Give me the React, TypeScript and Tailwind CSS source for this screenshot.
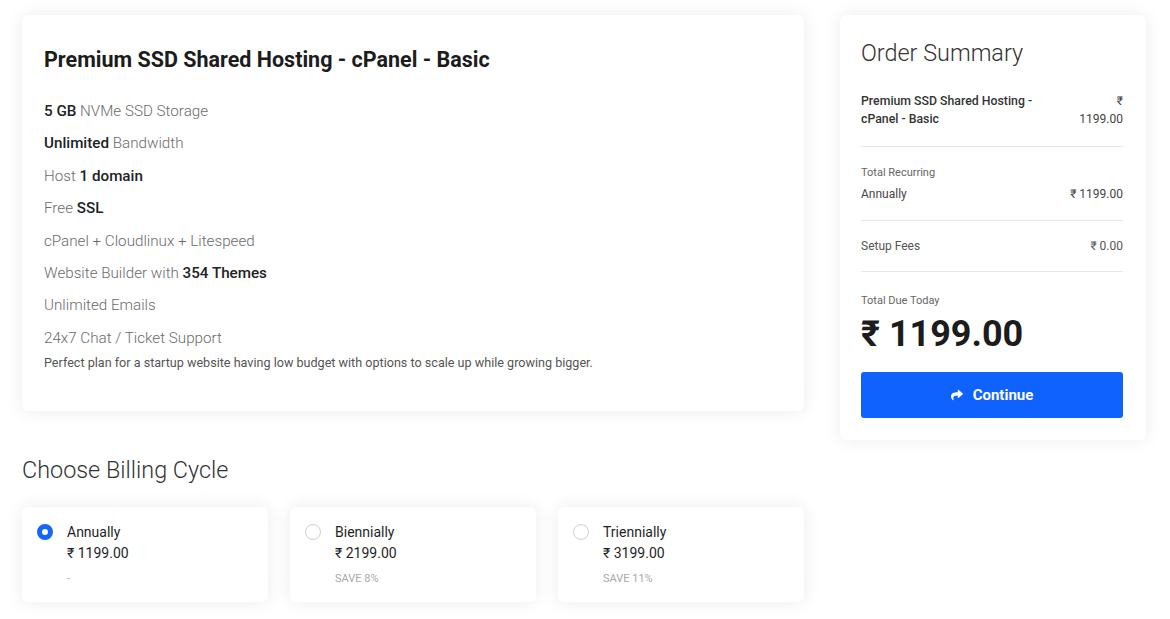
import React, { useState } from 'react';

const features: { pre?: string; bold?: string; post?: string }[] = [
  { bold: '5 GB', post: ' NVMe SSD Storage' },
  { bold: 'Unlimited', post: ' Bandwidth' },
  { pre: 'Host ', bold: '1 domain' },
  { pre: 'Free ', bold: 'SSL' },
  { pre: 'cPanel + Cloudlinux + Litespeed' },
  { pre: 'Website Builder with ', bold: '354 Themes' },
  { pre: 'Unlimited Emails' },
  { pre: '24x7 Chat / Ticket Support' },
];

const cycles = [
  { name: 'Annually', price: '₹ 1199.00', note: '-' },
  { name: 'Biennially', price: '₹ 2199.00', note: 'SAVE 8%' },
  { name: 'Triennially', price: '₹ 3199.00', note: 'SAVE 11%' },
];

const ShareIcon = () => (
  <svg viewBox="0 0 512 512" className="w-[12px] h-[12px]" fill="currentColor">
    <path d="M503.691 189.836L327.687 37.851C312.281 24.546 288 35.347 288 56.015v80.053C127.371 137.907 0 170.1 0 322.326c0 61.441 39.581 122.309 83.333 154.132 13.653 9.931 33.111-2.533 28.077-18.631C66.066 312.814 132.917 274.316 288 272.085V360c0 20.7 24.3 31.453 39.687 18.164l176.004-152c11.071-9.562 11.086-26.753 0-36.328z" />
  </svg>
);

const App: React.FC = () => {
  const [cycle, setCycle] = useState(0);

  return (
    <div className="min-h-screen bg-white font-['Roboto','Liberation_Sans',sans-serif] text-[#222]">
      <div className="flex gap-[36px] pl-[22px] pt-[15px] pr-[24px]">
        {/* Left column */}
        <div className="w-[782px] shrink-0">
          <div className="bg-white rounded-[6px] shadow-[0_0_18px_rgba(0,0,0,0.08)] px-[22px] pt-[31px] pb-[39px]">
            <h2 className="text-[21.5px] leading-[28px] font-bold text-[#1c1c1c]">
              Premium SSD Shared Hosting - cPanel - Basic
            </h2>
            <div className="mt-[26px]">
              {features.map((f, i) => (
                <p
                  key={i}
                  className={`text-[15.2px] leading-[22px] font-light text-[#6b6b6b] ${i < features.length - 1 ? 'mb-[10.4px]' : 'mb-[5px]'}`}
                >
                  {f.pre}
                  {f.bold && <span className="font-medium text-[#222]">{f.bold}</span>}
                  {f.post}
                </p>
              ))}
              <p className="text-[12.6px] leading-[18px] text-[#555]">
                Perfect plan for a startup website having low budget with options to scale up while growing bigger.
              </p>
            </div>
          </div>

          <h3 className="mt-[43px] text-[23.4px] leading-[32px] font-light text-[#333]">Choose Billing Cycle</h3>

          <div className="mt-[21px] grid grid-cols-3 gap-[22px]">
            {cycles.map((c, i) => (
              <button
                key={c.name}
                type="button"
                onClick={() => setCycle(i)}
                className="flex text-left bg-white rounded-[6px] shadow-[0_0_18px_rgba(0,0,0,0.08)] px-[15px] pt-[15px] pb-[16px] h-[95px]"
              >
                <span className="mt-[2px] w-[16px] h-[16px] shrink-0">
                  {cycle === i ? (
                    <span className="block w-[16px] h-[16px] rounded-full border-[5px] border-[#1565fb] bg-white" />
                  ) : (
                    <span className="block w-[16px] h-[16px] rounded-full border border-[#d0d0d0] bg-white" />
                  )}
                </span>
                <span className="ml-[14px] flex flex-col">
                  <span className="text-[14px] leading-[20px] font-normal text-[#1f1f1f]">{c.name}</span>
                  <span className="mt-[1px] text-[14px] leading-[20px] font-normal text-[#1f1f1f]">{c.price}</span>
                  <span className="mt-[8px] text-[11px] leading-[16px] text-[#a8a8a8]">{c.note}</span>
                </span>
              </button>
            ))}
          </div>
        </div>

        {/* Order summary */}
        <div className="w-[306px] shrink-0">
          <div className="bg-white rounded-[6px] shadow-[0_0_18px_rgba(0,0,0,0.08)] pl-[21px] pr-[23px] pt-[22px] pb-[22px]">
            <h3 className="text-[23.4px] leading-[32px] font-light text-[#333]">Order Summary</h3>

            <div className="mt-[23px] pb-[18px] border-b border-[#e8e8e8] flex justify-between">
              <div className="w-[190px] text-[12.3px] leading-[18px] font-medium text-[#333]">
                Premium SSD Shared Hosting - cPanel - Basic
              </div>
              <div className="w-[50px] text-right text-[12px] leading-[18px] text-[#444]">₹ 1199.00</div>
            </div>

            <div className="pt-[18px] pb-[17px] border-b border-[#e8e8e8]">
              <div className="text-[11px] leading-[16px] text-[#666]">Total Recurring</div>
              <div className="mt-[4px] flex justify-between text-[12px] leading-[18px] text-[#444]">
                <span>Annually</span>
                <span>₹ 1199.00</span>
              </div>
            </div>

            <div className="pt-[16px] pb-[16px] border-b border-[#e8e8e8] flex justify-between text-[12px] leading-[18px] text-[#555]">
              <span>Setup Fees</span>
              <span>₹ 0.00</span>
            </div>

            <div className="mt-[21px] text-[11px] leading-[16px] text-[#666]">Total Due Today</div>
            <div className="mt-[5px] text-[36px] leading-[40px] font-bold text-[#1c1c1c]">₹ 1199.00</div>

            <button
              type="button"
              className="mt-[18px] w-full h-[46px] rounded-[3px] bg-[#0f62fe] text-white flex items-center justify-center gap-[10px] text-[15px] font-bold"
            >
              <ShareIcon />
              Continue
            </button>
          </div>
        </div>
      </div>
    </div>
  );
};

export default App;
